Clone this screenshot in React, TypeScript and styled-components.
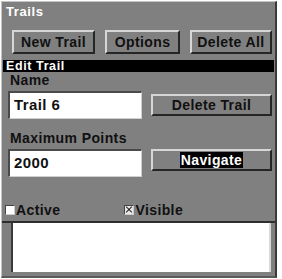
import React from "react";
import styled, { createGlobalStyle } from "styled-components";

const GlobalStyle = createGlobalStyle`
  html, body {
    margin: 0;
    padding: 0;
    background: #ffffff;
  }
  body {
    font-family: "Liberation Sans", Arial, sans-serif;
    font-weight: bold;
    letter-spacing: 0.4px;
  }
`;

const App: React.FC = () => {
  return (
    <>
      <GlobalStyle />
      <Panel>
        <Title>Trails</Title>

        <ButtonRow>
          <Button width={83} height={24}>New Trail</Button>
          <Button width={75} height={24}>Options</Button>
          <Button width={82} height={24}>Delete All</Button>
        </ButtonRow>

        <SectionBar>Edit Trail</SectionBar>

        <FormGrid>
          <Label>Name</Label>
          <span />
          <TextBox>Trail 6</TextBox>
          <Button align="center">Delete Trail</Button>

          <Label gapTop={12}>Maximum Points</Label>
          <span />
          <TextBox>2000</TextBox>
          <Button align="start">
            <Selected>Navigate</Selected>
          </Button>
        </FormGrid>

        <CheckRow>
          <Check>
            <CheckBox />
            Active
          </Check>
          <Check>
            <CheckBox checked />
            Visible
          </Check>
        </CheckRow>

        <ListBox />
      </Panel>
    </>
  );
};

const Panel = styled.div`
  box-sizing: border-box;
  margin: 1px 0 0 1px;
  width: 276px;
  height: 277px;
  background: #808080;
  border-top: 1px solid #c4c4c4;
  border-left: 1px solid #c4c4c4;
  border-right: 2px solid #3a3a3a;
  border-bottom: 2px solid #5a5a5a;
  display: flex;
  flex-direction: column;
`;

const Title = styled.div`
  height: 20px;
  padding: 2px 0 0 4px;
  box-sizing: border-box;
  font-size: 13px;
  letter-spacing: 0.6px;
  line-height: 16px;
  color: #ffffff;
`;

const ButtonRow = styled.div`
  display: flex;
  gap: 10px;
  margin-top: 8px;
  padding-left: 10px;
`;

const Button = styled.div<{ width?: number; height?: number; align?: "center" | "start" }>`
  box-sizing: border-box;
  width: ${p => (p.width ? `${p.width}px` : "auto")};
  height: ${p => p.height || 22}px;
  align-self: ${p => p.align || "auto"};
  background: #808080;
  border-top: 2px solid #d6d6d6;
  border-left: 2px solid #d6d6d6;
  border-right: 2px solid #262626;
  border-bottom: 2px solid #262626;
  display: flex;
  align-items: center;
  justify-content: center;
  font-size: 14px;
  color: #111111;
`;

const SectionBar = styled.div`
  margin: 6px 1px 0 1px;
  height: 12px;
  padding-left: 3px;
  background: #000000;
  color: #ffffff;
  font-size: 12.5px;
  line-height: 12px;
  letter-spacing: 0.6px;
`;

const FormGrid = styled.div`
  display: grid;
  grid-template-columns: 134px 121px;
  column-gap: 9px;
  padding-left: 6px;
`;

const Label = styled.div<{ gapTop?: number }>`
  margin-top: ${p => p.gapTop || 1}px;
  margin-bottom: 3px;
  padding-left: 2px;
  font-size: 14px;
  line-height: 15px;
  color: #111111;
`;

const TextBox = styled.div`
  box-sizing: border-box;
  height: 28px;
  background: #ffffff;
  border-top: 2px solid #4a4a4a;
  border-left: 2px solid #4a4a4a;
  border-right: 1px solid #d0d0d0;
  border-bottom: 1px solid #d0d0d0;
  padding-left: 4px;
  font-size: 15px;
  line-height: 24px;
  color: #111111;
`;

const Selected = styled.span`
  background: #000000;
  color: #ffffff;
  padding: 0 1px;
  line-height: 16px;
`;

const CheckRow = styled.div`
  display: flex;
  gap: 64px;
  margin-top: 26px;
  padding-left: 3px;
`;

const Check = styled.div`
  display: flex;
  align-items: center;
  gap: 1px;
  font-size: 14px;
  line-height: 14px;
  color: #111111;
`;

const CheckBox = styled.span<{ checked?: boolean }>`
  box-sizing: border-box;
  width: 10px;
  height: 10px;
  background: #ffffff;
  border-top: 1px solid #444444;
  border-left: 1px solid #444444;
  border-right: 1px solid #cccccc;
  border-bottom: 1px solid #cccccc;
  position: relative;
  ${p =>
    p.checked
      ? `
    background: #e8e8e8;
    &::before, &::after {
      content: "";
      position: absolute;
      left: 0;
      top: 3px;
      width: 8px;
      height: 1px;
      background: #222222;
    }
    &::before { transform: rotate(45deg); }
    &::after { transform: rotate(-45deg); }
  `
      : ""}
`;

const ListBox = styled.div`
  flex: 1;
  margin: 4px 0 0 0;
  border-top: 2px solid #2e2e2e;
  padding: 0 4px 4px 9px;
  display: flex;
  &::before {
    content: "";
    flex: 1;
    background: #ffffff;
    border-left: 2px solid #3a3a3a;
    border-right: 2px solid #d8d8d8;
  }
`;

export default App;
